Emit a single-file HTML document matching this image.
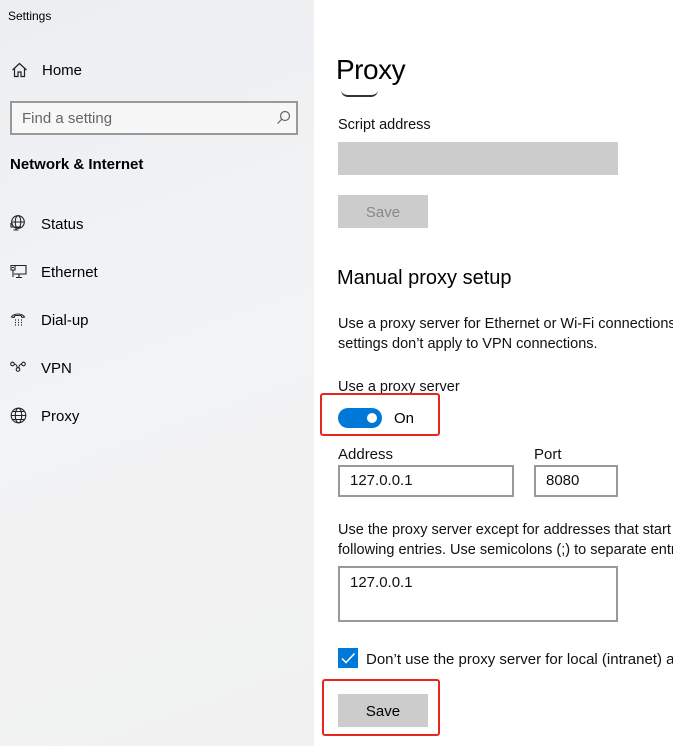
<!DOCTYPE html>
<html><head><meta charset="utf-8"><style>
*{margin:0;padding:0;box-sizing:border-box}
html,body{width:673px;height:746px;overflow:hidden}
body{font-family:"Liberation Sans",sans-serif;color:#000;background:#fff;position:relative}
#wrap{position:absolute;left:0;top:0;width:673px;height:746px;overflow:hidden}
.a{position:absolute;white-space:nowrap}
#side{position:absolute;left:0;top:0;width:314px;height:746px;background:linear-gradient(160deg,#eceff2,#f2f3f4 50%,#f1f1f1)}
.nav{font-size:15px;left:41px}
.ic{position:absolute;left:10px}
.t{font-size:14.5px;color:#111}
.box{position:absolute;border:2px solid #999;background:#fff}
.btn{position:absolute;background:#ccc;font-size:15px;text-align:center;line-height:35px}
.red{position:absolute;border:2px solid #e8261e;border-radius:3px}
</style></head><body><div id="wrap">
<div id="side">
<div class="a" style="left:8px;top:9px;font-size:12px">Settings</div>
<svg class="ic" style="left:11px;top:62px" width="17" height="16" viewBox="0 0 17 16" fill="none" stroke="#222" stroke-width="1.2"><path d="M1.5 8L8.5 1.5 15.5 8M3.5 6.5V14.5H7V10H10V14.5H13.5V6.5"/></svg>
<div class="a nav" style="left:42px;top:62px">Home</div>
<div class="box" style="left:10px;top:101px;width:288px;height:34px;background:#f7f7f7"></div>
<div class="a" style="left:22px;top:110px;font-size:15px;color:#666">Find a setting</div>
<svg class="a" style="left:276px;top:110px" width="15" height="15" viewBox="0 0 15 15" fill="none" stroke="#666" stroke-width="1.2"><circle cx="9" cy="6" r="4.5"/><path d="M6 9L1.5 13.5"/></svg>
<div class="a" style="left:10px;top:156px;font-size:15px;font-weight:bold">Network &amp; Internet</div>
<svg class="ic" style="top:215px" width="16" height="17" viewBox="0 0 16 17" fill="none" stroke="#222" stroke-width="1.1"><circle cx="8" cy="7" r="6.3"/><ellipse cx="8" cy="7" rx="2.8" ry="6.3"/><path d="M1.7 7H14.3M1 8V12H11M6 12V15M3.5 15H8.5"/></svg>
<div class="a nav" style="top:216px">Status</div>
<svg class="ic" style="top:264px" width="17" height="15" viewBox="0 0 17 15" fill="none" stroke="#222" stroke-width="1.1"><path d="M4 1.5H16V10H4M1 1.5H5V6H1ZM2 3.5H4M9 10V13M6 13.5H12M3 6V13"/></svg>
<div class="a nav" style="top:264px">Ethernet</div>
<svg class="ic" style="top:312px" width="16" height="15" viewBox="0 0 16 15" fill="none" stroke="#222" stroke-width="1.1"><path d="M1.5 5C4 1 12 1 14.5 5L12 5.5 11 3.5H5L4 5.5Z"/><path d="M5 8h1M8 8h1M11 8h1M5 10.5h1M8 10.5h1M11 10.5h1M5 13h1M8 13h1M11 13h1" stroke-width="1.3"/></svg>
<div class="a nav" style="top:312px">Dial-up</div>
<svg class="ic" style="top:361px" width="16" height="12" viewBox="0 0 16 12" fill="none" stroke="#222" stroke-width="1.1"><circle cx="2.5" cy="3" r="1.8"/><circle cx="13.5" cy="3" r="1.8"/><circle cx="8" cy="8.5" r="1.8"/><path d="M4.3 3C6 3 7 5 7.2 6.8M11.7 3C10 3 9 5 8.8 6.8"/></svg>
<div class="a nav" style="top:360px">VPN</div>
<svg class="ic" style="top:407px" width="17" height="17" viewBox="0 0 17 17" fill="none" stroke="#222" stroke-width="1.1"><circle cx="8.5" cy="8.5" r="7.3"/><ellipse cx="8.5" cy="8.5" rx="3.2" ry="7.3"/><path d="M1.2 8.5H15.8M2.5 4.5H14.5M2.5 12.5H14.5"/></svg>
<div class="a nav" style="top:408px">Proxy</div>
</div>

<div class="a" style="left:336px;top:54px;font-size:28px;font-weight:300;letter-spacing:-0.5px">Proxy</div>
<div class="a" style="left:341px;top:90px;width:37px;height:7px;border-bottom:2px solid #333;border-radius:0 0 10px 10px"></div>
<div class="a t" style="left:338px;top:117px">Script address</div>
<div class="a" style="left:338px;top:142px;width:280px;height:33px;background:#ccc"></div>
<div class="btn" style="left:338px;top:195px;width:90px;height:33px;color:#888">Save</div>
<div class="a" style="left:337px;top:267px;font-size:20px">Manual proxy setup</div>
<div class="a t" style="left:338px;top:315px;line-height:19.5px">Use a proxy server for Ethernet or Wi-Fi connections. These<br>settings don’t apply to VPN connections.</div>
<div class="a t" style="left:338px;top:379px">Use a proxy server</div>
<div class="a" style="left:338px;top:408px;width:44px;height:20px;background:#0078d7;border-radius:10px"></div>
<div class="a" style="left:367px;top:413px;width:10px;height:10px;background:#fff;border-radius:50%"></div>
<div class="a" style="left:394px;top:410px;font-size:15px">On</div>
<div class="red" style="left:320px;top:393px;width:120px;height:43px"></div>
<div class="a t" style="left:338px;top:446px;font-size:15px">Address</div>
<div class="a t" style="left:534px;top:446px;font-size:15px">Port</div>
<div class="box" style="left:338px;top:465px;width:176px;height:32px"></div>
<div class="a t" style="left:350px;top:472px;font-size:15px">127.0.0.1</div>
<div class="box" style="left:534px;top:465px;width:84px;height:32px"></div>
<div class="a t" style="left:546px;top:472px;font-size:15px">8080</div>
<div class="a t" style="left:338px;top:520px;line-height:20px">Use the proxy server except for addresses that start with the<br>following entries. Use semicolons (;) to separate entries.</div>
<div class="box" style="left:338px;top:566px;width:280px;height:56px"></div>
<div class="a t" style="left:350px;top:574px;font-size:15px">127.0.0.1</div>
<div class="a" style="left:338px;top:648px;width:20px;height:20px;background:#0078d7"></div>
<svg class="a" style="left:338px;top:648px" width="20" height="20" viewBox="0 0 20 20" fill="none" stroke="#fff" stroke-width="1.5"><path d="M4 10.5L8 14.5 16.5 5.5"/></svg>
<div class="a t" style="left:366px;top:651px;font-size:15px">Don’t use the proxy server for local (intranet) addresses</div>
<div class="red" style="left:322px;top:679px;width:118px;height:57px"></div>
<div class="btn" style="left:338px;top:694px;width:90px;height:33px">Save</div>
</div></body></html>
